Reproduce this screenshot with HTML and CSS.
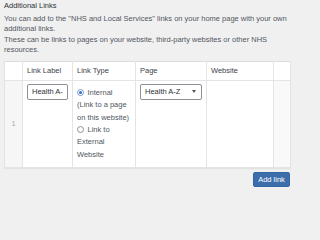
FILE: index.html
```html
<!DOCTYPE html>
<html>
<head>
<meta charset="utf-8">
<link rel="stylesheet" href="styles.css">
</head>
<body>
<div class="field">
  <div class="label">Additional Links</div>
  <p class="desc">You can add to the "NHS and Local Services" links on your home page with your own additional links.<br>These can be links to pages on your website, third-party websites or other NHS resources.</p>
  <table class="repeater">
    <colgroup>
      <col class="c-order"><col class="c-label"><col class="c-type"><col class="c-page"><col class="c-web"><col class="c-remove">
    </colgroup>
    <thead>
      <tr>
        <th class="order"></th>
        <th>Link Label</th>
        <th>Link Type</th>
        <th>Page</th>
        <th>Website</th>
        <th class="remove"></th>
      </tr>
    </thead>
    <tbody>
      <tr>
        <td class="order num">1</td>
        <td><input class="text" type="text" value="Health A-Z"></td>
        <td>
          <ul class="radios">
            <li><label><span class="radio on"></span>Internal<br>(Link to a page<br>on this website)</label></li>
            <li><label><span class="radio"></span>Link to<br>External<br>Website</label></li>
          </ul>
        </td>
        <td><div class="select"><span>Health A-Z</span><svg class="caret" width="4" height="3" viewBox="0 0 4 3"><path d="M0 0H4L2 3Z" fill="#50575e"/></svg></div></td>
        <td></td>
        <td class="remove"></td>
      </tr>
    </tbody>
  </table>
  <div class="actions"><button class="btn" type="button">Add link</button></div>
</div>
</body>
</html>
```
FILE: styles.css
```css
html, body {
  margin: 0;
  padding: 0;
  background: #f0f0f1;
}
body {
  font-family: "Liberation Sans", Arial, sans-serif;
  font-size: 7.5px;
  color: #50575e;
}
.field {
  width: 286px;
  padding: 1px 0 0 4px;
}
.label {
  line-height: 10px;
  color: #2c3338;
  margin: 0;
}
.desc {
  margin: 2.7px 0 0;
  line-height: 10.6px;
}
.repeater {
  margin-top: 4.5px;
  width: 286px;
  table-layout: fixed;
  border-collapse: collapse;
  background: #fff;
  border: 1px solid #dcdcde;
  box-shadow: 0 1px 1px rgba(0,0,0,.05);
}
.c-order { width: 18px; }
.c-label { width: 50px; }
.c-type { width: 63px; }
.c-page { width: 71px; }
.c-web { width: 67px; }
.c-remove { width: 17px; }
.repeater th {
  height: 18px;
  padding: 0 4px;
  font-weight: normal;
  text-align: left;
  color: #3c434a;
  border: 1px solid #e4e4e6;
  border-top: 0;
}
.repeater td {
  vertical-align: top;
  padding: 3px 4px 4px;
  border: 1px solid #e4e4e6;
}
.repeater td.order {
  background: #f6f6f6;
  vertical-align: middle;
  text-align: center;
  color: #a7aaad;
  padding: 0;
}
.repeater td.remove {
  background: #f9f9f9;
}
.text {
  display: block;
  box-sizing: border-box;
  width: 41px;
  height: 16px;
  margin: 0;
  padding: 0 4px;
  border: 1px solid #8c8f94;
  border-radius: 2px;
  font: inherit;
  color: #2c3338;
  background: #fff;
  outline: none;
}
.radios {
  list-style: none;
  margin: 0;
  padding: 3.5px 0 2px;
  line-height: 12.3px;
  color: #50575e;
}
.radios li { margin: 0; }
.radio {
  display: inline-block;
  box-sizing: border-box;
  width: 7px;
  height: 7px;
  border: 1px solid #8c8f94;
  border-radius: 50%;
  margin: 0 3.5px 0 0;
  vertical-align: -1px;
  background: #fff;
  position: relative;
}
.radio.on {
  border-color: #7e9ac0;
}
.radio.on::after {
  content: "";
  position: absolute;
  left: 1px;
  top: 1px;
  width: 3px;
  height: 3px;
  border-radius: 50%;
  background: #2f6dd3;
}
.select {
  box-sizing: border-box;
  width: 62px;
  height: 16px;
  border: 1px solid #8c8f94;
  border-radius: 2px;
  background: #fff;
  display: flex;
  align-items: center;
  justify-content: space-between;
  padding: 0 5px 0 4px;
  color: #2c3338;
}
.caret { display: block; }
.actions {
  display: flex;
  justify-content: flex-end;
  margin-top: 4px;
}
.btn {
  box-sizing: border-box;
  width: 37px;
  height: 15px;
  padding: 0;
  border: 1px solid #3567a3;
  border-radius: 2px;
  background: #3d6eab;
  color: #fff;
  font: inherit;
  cursor: pointer;
}
```
